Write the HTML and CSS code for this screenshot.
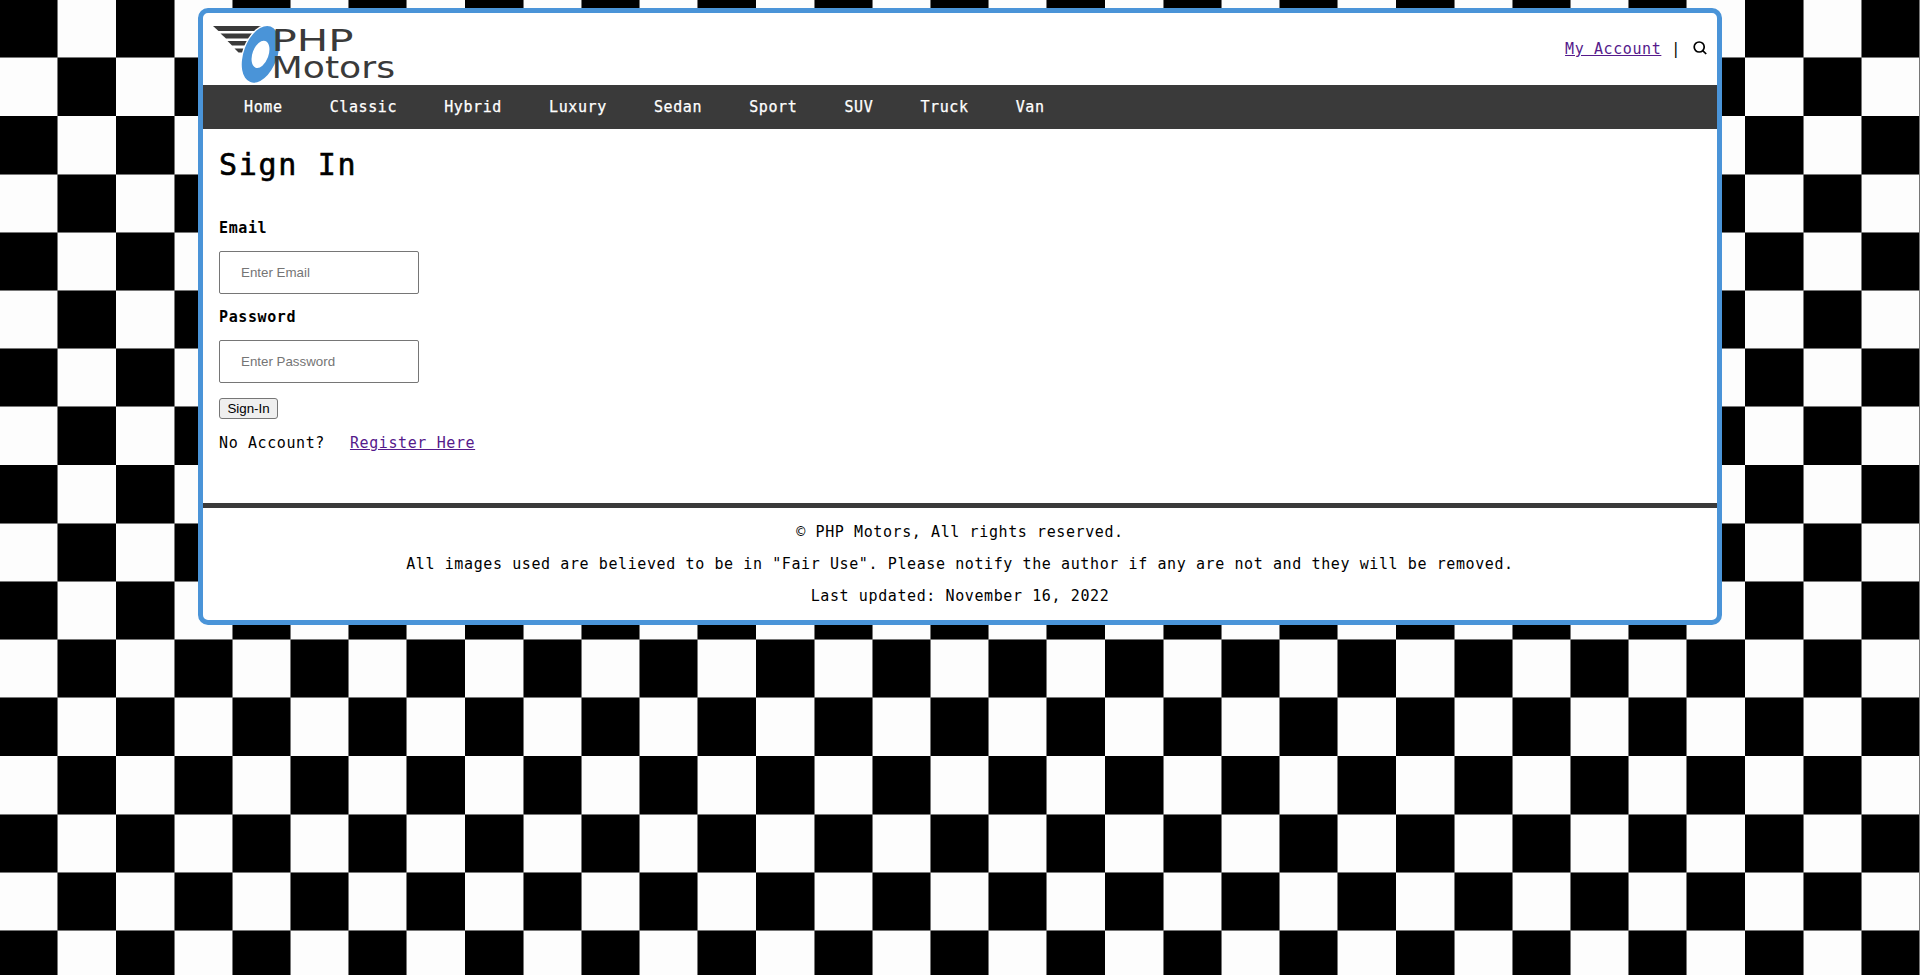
FILE: index.html
```
<!DOCTYPE html>
<html lang="en">
<head>
<meta charset="utf-8">
<title>Sign In | PHP Motors</title>
<link rel="stylesheet" href="styles.css">
</head>
<body>
<div class="wrapper">
  <header class="header">
    <svg class="logo" width="184" height="60" viewBox="0 0 184 60" role="img" aria-label="PHP Motors">
      <g fill="#3a3a3a">
        <path d="M0 1H51V6H5.500Z"/>
        <path d="M7.500 8.500H44V13.500H13Z"/>
        <path d="M14.500 16H40V20.500H19Z"/>
        <path d="M21.500 23.500H36V27.500H25.500Z"/>
      </g>
      <g transform="rotate(20 47.500 29.300)">
        <ellipse cx="47.500" cy="29.300" rx="18.200" ry="31" fill="#fff"/>
        <ellipse cx="47.500" cy="29.300" rx="16.800" ry="29.600" fill="#4a94d8"/>
        <ellipse cx="47.500" cy="29.300" rx="8" ry="14.200" fill="#fff"/>
      </g>
      <g class="logo-text">
        <text x="58.500" y="26" textLength="82" lengthAdjust="spacingAndGlyphs">PHP</text>
        <text x="58.500" y="53" textLength="123.500" lengthAdjust="spacingAndGlyphs">Motors</text>
      </g>
    </svg>
    <div class="tools">
      <a href="#">My Account</a><span class="divider">|</span>
      <svg class="search" width="14" height="14" viewBox="0 0 14 14" fill="none" stroke="#000" stroke-width="1.700">
        <circle cx="6.200" cy="6" r="5"/><path d="M9.500 9.300L13.200 13"/>
      </svg>
    </div>
  </header>
  <nav class="nav">
    <a>Home</a><a>Classic</a><a>Hybrid</a><a>Luxury</a><a>Sedan</a><a>Sport</a><a>SUV</a><a>Truck</a><a>Van</a>
  </nav>
  <main class="main">
    <h1>Sign In</h1>
    <form class="form">
      <label for="email">Email</label>
      <input id="email" type="email" placeholder="Enter Email">
      <label for="password">Password</label>
      <input id="password" type="password" placeholder="Enter Password">
      <button type="button">Sign-In</button>
    </form>
    <p class="register"><span>No Account?</span><a href="#">Register Here</a></p>
  </main>
  <footer class="footer">
    <p>© PHP Motors, All rights reserved.</p>
    <p>All images used are believed to be in "Fair Use". Please notify the author if any are not and they will be removed.</p>
    <p>Last updated: November 16, 2022</p>
  </footer>
</div>
</body>
</html>
```
FILE: styles.css
```
* { box-sizing: border-box; }
/* Checkerboard: column and row stripes combined by difference, with thin seams on top */
html {
  min-height: 100vh;
  background-color: #000;
  background-image:
    repeating-linear-gradient(to right, transparent 0 57.400px, #777 57.400px 58.180px),
    repeating-linear-gradient(to bottom, transparent 0 57.400px, #777 57.400px 58.180px),
    repeating-linear-gradient(to right, #000 0 58.180px, #fdfdfd 58.180px 116.360px),
    repeating-linear-gradient(to bottom, #000 0 58.180px, #fdfdfd 58.180px 116.360px);
  background-blend-mode: normal, normal, difference, normal;
}
body {
  margin: 0;
  padding-top: 8px;
  font: 15px/20px "DejaVu Sans Mono", monospace;
  letter-spacing: 0.600px;
  color: #000;
}
.wrapper {
  width: 1524px;
  margin: 0 auto;
  border: 5px solid #4a94d8;
  border-radius: 10px;
  background: #fff;
}
a { color: #551a8b; }
.header {
  display: flex;
  justify-content: space-between;
  height: 72px;
  padding: 12px 10px 0 10px;
}
.logo-text {
  font: 31px "DejaVu Sans", sans-serif;
  letter-spacing: 0;
  fill: #3a3a3a;
}
.tools { display: flex; height: 48px; align-items: center; }
.divider { margin: 0 12px 0 10px; }
.search { margin-bottom: 2px; }
.nav {
  display: flex;
  gap: 47.100px;
  height: 44px;
  padding: 12px 41px;
  background: #3a3a3a;
}
.nav a { color: #fff; -webkit-text-stroke: 0.250px #fff; }
.main { height: 374px; padding: 16px 16px 0; }
h1 {
  margin: 0 0 33px;
  font-size: 30px;
  line-height: 40px;
  letter-spacing: 1.700px;
  font-weight: 400;
  -webkit-text-stroke: 0.600px #000;
}
.form { display: flex; flex-direction: column; align-items: flex-start; }
.form label { font-weight: 700; margin-bottom: 13px; }
.form input {
  width: 200px;
  height: 43px;
  margin: 0 0 13px;
  padding: 0 21px;
  border: 1px solid #767676;
  border-radius: 2px;
  font: 13.333px "Liberation Sans", Arial, sans-serif;
}
.form input::placeholder { color: #757575; }
.form button {
  width: 59px;
  height: 21px;
  margin-top: 2px;
  padding: 0;
  border: 1px solid #767676;
  border-radius: 3px;
  background: #efefef;
  font: 13.333px "Liberation Sans", Arial, sans-serif;
}
.register { display: flex; gap: 25px; margin: 14px 0 0; }
.footer {
  height: 117px;
  padding-top: 8px;
  border-top: 5px solid #3a3a3a;
  text-align: center;
}
.footer p { margin: 0; line-height: 32px; }
```
